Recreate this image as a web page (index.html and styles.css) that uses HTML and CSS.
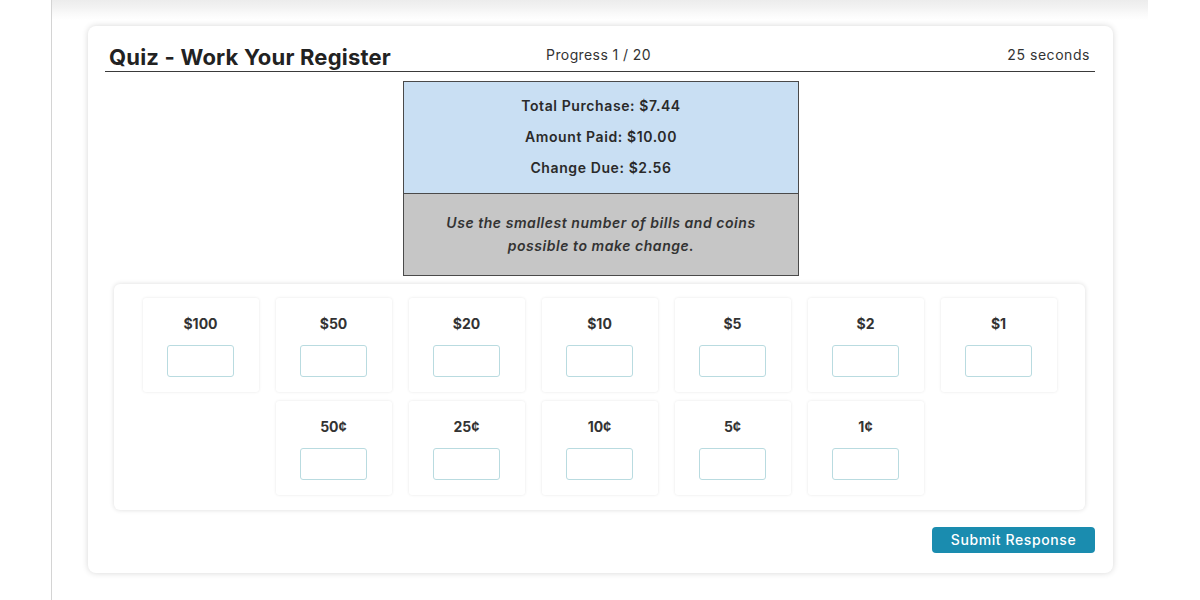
FILE: index.html
```html
<!DOCTYPE html>
<html lang="en">
<head>
<meta charset="utf-8">
<title>Quiz - Work Your Register</title>
<link rel="stylesheet" href="styles.css">
</head>
<body>
<main class="page">
  <section class="card">
    <header class="quiz-header">
      <h1 class="title">Quiz - Work Your Register</h1>
      <span class="progress">Progress 1 / 20</span>
      <span class="timer">25 seconds</span>
    </header>

    <div class="info">
      <div class="info-top">
        <p>Total Purchase: $7.44</p>
        <p>Amount Paid: $10.00</p>
        <p>Change Due: $2.56</p>
      </div>
      <div class="info-bottom">
        <p>Use the smallest number of bills and coins<br>possible to make change.</p>
      </div>
    </div>

    <div class="panel">
      <div class="tile"><span class="label">$100</span><input class="field" type="text"></div>
      <div class="tile"><span class="label">$50</span><input class="field" type="text"></div>
      <div class="tile"><span class="label">$20</span><input class="field" type="text"></div>
      <div class="tile"><span class="label">$10</span><input class="field" type="text"></div>
      <div class="tile"><span class="label">$5</span><input class="field" type="text"></div>
      <div class="tile"><span class="label">$2</span><input class="field" type="text"></div>
      <div class="tile"><span class="label">$1</span><input class="field" type="text"></div>
      <div class="tile"><span class="label">50¢</span><input class="field" type="text"></div>
      <div class="tile"><span class="label">25¢</span><input class="field" type="text"></div>
      <div class="tile"><span class="label">10¢</span><input class="field" type="text"></div>
      <div class="tile"><span class="label">5¢</span><input class="field" type="text"></div>
      <div class="tile"><span class="label">1¢</span><input class="field" type="text"></div>
    </div>

    <div class="actions">
      <button class="submit" type="button">Submit Response</button>
    </div>
  </section>
</main>
</body>
</html>
```

FILE: styles.css
```css
* { box-sizing: border-box; }

html, body {
  margin: 0;
  padding: 0;
  height: 600px;
  overflow: hidden;
  background: #ffffff;
  font-family: Inter, "Open Sans", "Liberation Sans", sans-serif;
  color: #222;
}

.page {
  margin-left: 51px;
  width: 1097px;
  height: 600px;
  border-left: 1px solid #d4d4d4;
  background: linear-gradient(#ececec 0px, #f3f3f3 8px, #fafafa 14px, #ffffff 20px);
  padding: 26px 0 0 36px;
}

.card {
  width: 1025px;
  height: 547px;
  background: #fff;
  border-radius: 8px;
  box-shadow: 0 0 6px rgba(0, 0, 0, 0.16);
  padding: 0 18px 0 19px;
  display: flex;
  flex-direction: column;
}

.quiz-header {
  display: grid;
  grid-template-columns: 1fr auto 1fr;
  align-items: end;
  border-bottom: 1.5px solid #3a3a3a;
  padding: 16px 5px 1px 4px;
  margin-left: -2px;
}

.title {
  margin: 0;
  font-size: 22px;
  font-weight: 700;
  color: #222;
  line-height: 24px;
  padding: 3px 0 1px;
  letter-spacing: 0.2px;
}

.progress {
  font-size: 14px;
  color: #333;
  line-height: 20px;
  padding-bottom: 5px;
  margin-left: -2px;
  letter-spacing: 0.4px;
}

.timer {
  justify-self: end;
  font-size: 14px;
  color: #333;
  line-height: 20px;
  padding-bottom: 5px;
  letter-spacing: 0.55px;
}

.info {
  width: 396px;
  margin: 9px auto 0;
  border: 1px solid #4a4a4a;
}

.info p { margin: 0; }

.info-top {
  background: #c9dff3;
  height: 112px;
  border-bottom: 1px solid #4a4a4a;
  display: flex;
  flex-direction: column;
  align-items: center;
  padding-top: 14px;
  gap: 11px;
  font-size: 14px;
  font-weight: 600;
  color: #2a2a2a;
  line-height: 20px;
  letter-spacing: 0.6px;
}

.info-bottom {
  background: #c6c6c6;
  height: 81px;
  text-align: center;
  padding-top: 17px;
  font-size: 14px;
  font-weight: 600;
  font-style: italic;
  color: #333;
  line-height: 23px;
  letter-spacing: 0.55px;
}

.panel {
  width: 971px;
  margin: 8px 0 0 7px;
  background: #fff;
  border-radius: 6px;
  box-shadow: 0 0 5px rgba(0, 0, 0, 0.14);
  padding: 14px 0 15px;
  display: flex;
  flex-wrap: wrap;
  justify-content: center;
  column-gap: 17px;
  row-gap: 9px;
}

.tile {
  width: 116px;
  height: 94px;
  background: #fff;
  border-radius: 3px;
  box-shadow: 0 0 3px rgba(0, 0, 0, 0.1);
  display: flex;
  flex-direction: column;
  align-items: center;
  padding-top: 16px;
  gap: 11px;
}

.label {
  font-size: 14px;
  font-weight: 700;
  color: #333;
  line-height: 20px;
}

.field {
  width: 67px;
  height: 32px;
  border: 1px solid #b9dbe0;
  border-radius: 3px;
  background: #fff;
  outline: none;
  padding: 0;
}

.actions {
  display: flex;
  justify-content: flex-end;
  margin-top: 17px;
}

.submit {
  width: 163px;
  height: 26px;
  border: none;
  border-radius: 4px;
  background: #1a8caf;
  color: #fff;
  font-family: inherit;
  font-size: 14px;
  font-weight: 500;
  padding: 0;
  line-height: 26px;
  letter-spacing: 0.6px;
}
```
